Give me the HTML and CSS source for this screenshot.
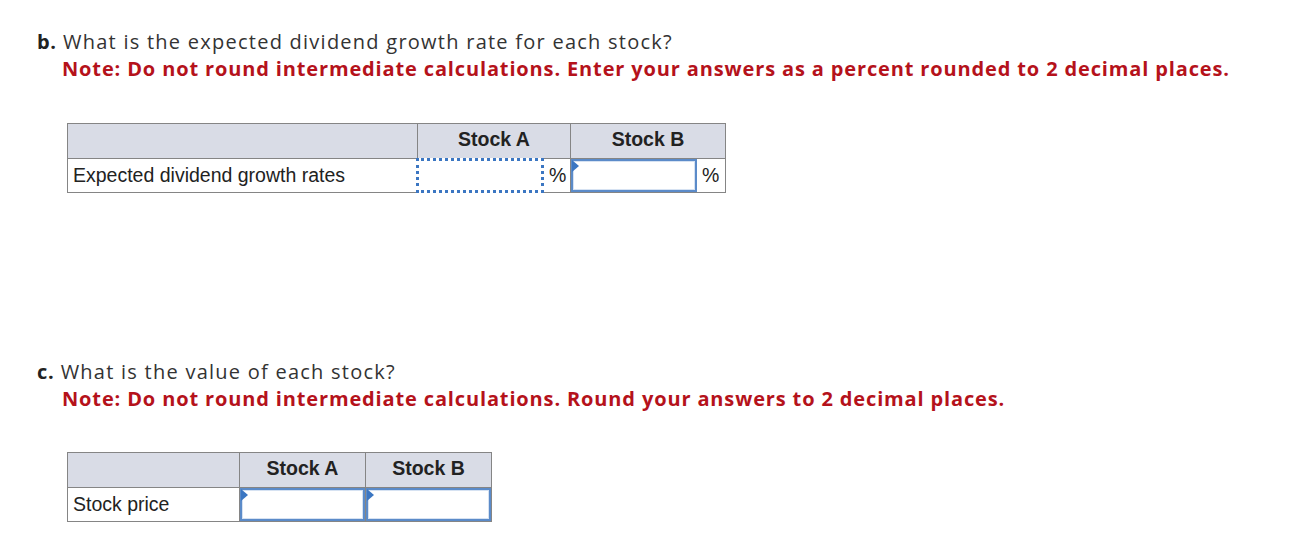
FILE: index.html
```html
<!DOCTYPE html>
<html>
<head>
<meta charset="utf-8">
<link rel="stylesheet" href="styles.css">
</head>
<body>
<div class="page">
  <section class="part part-b">
    <p class="question"><b>b.</b> What is the expected dividend growth rate for each stock?</p>
    <p class="note">Note: Do not round intermediate calculations. Enter your answers as a percent rounded to 2 decimal places.</p>
    <table class="grid grid-b">
      <thead>
        <tr>
          <th class="label-col"></th>
          <th class="val-col col-a">Stock A</th>
          <th class="val-col col-b">Stock B</th>
        </tr>
      </thead>
      <tbody>
        <tr>
          <td class="label">Expected dividend growth rates</td>
          <td class="val"><div class="cellwrap"><span class="inp inp-focus"></span><span class="pct">%</span></div></td>
          <td class="val"><div class="cellwrap"><span class="inp inp-flag"></span><span class="pct">%</span></div></td>
        </tr>
      </tbody>
    </table>
  </section>
  <section class="part part-c">
    <p class="question"><b>c.</b> What is the value of each stock?</p>
    <p class="note">Note: Do not round intermediate calculations. Round your answers to 2 decimal places.</p>
    <table class="grid grid-c">
      <thead>
        <tr>
          <th class="label-col"></th>
          <th class="val-col">Stock A</th>
          <th class="val-col">Stock B</th>
        </tr>
      </thead>
      <tbody>
        <tr>
          <td class="label">Stock price</td>
          <td class="val full"><span class="inp inp-flag inp-full"></span></td>
          <td class="val full"><span class="inp inp-flag inp-full"></span></td>
        </tr>
      </tbody>
    </table>
  </section>
</div>
</body>
</html>
```

FILE: styles.css
```css
html, body {
  margin: 0;
  padding: 0;
  background: #ffffff;
}

.page {
  padding: 28px 0 0 37px;
  font-family: "Open Sans", "Liberation Sans", sans-serif;
}

.question,
.note {
  margin: 0;
  font-size: 20px;
  line-height: 27px;
  color: #333333;
}

.question {
  letter-spacing: 1.25px;
}

.question b {
  font-weight: 700;
  color: #222222;
  letter-spacing: 0.6px;
}

.note {
  padding-left: 25px;
  color: #b5121b;
  font-weight: 700;
  letter-spacing: 0.86px;
}

.grid {
  border-collapse: collapse;
  margin-left: 30px;
  font-family: "Liberation Sans", Arial, sans-serif;
  font-size: 19.5px;
  color: #222222;
}

.grid-b {
  margin-top: 41px;
}

.part-c {
  margin-top: 165px;
}

.grid-c {
  margin-top: 40px;
}

.grid th {
  background: #d9dce6;
  border: 1px solid #858585;
  height: 31px;
  padding: 0 0 3px 0;
  font-weight: 700;
  text-align: center;
}

.grid td {
  border: 1px solid #858585;
  height: 33px;
  padding: 0;
  background: #ffffff;
}

.grid-b .label-col { width: 349px; }
.grid-b .col-a { width: 152px; }
.grid-b .col-b { width: 154px; }
.grid-c .label-col { width: 171px; }
.grid-c .val-col { width: 125px; }

.grid td.label {
  padding-left: 5px;
  text-align: left;
}

.cellwrap {
  display: flex;
  align-items: center;
  height: 33px;
}

.inp {
  display: block;
  position: relative;
  box-sizing: border-box;
  background: #ffffff;
}

.grid-b .inp {
  width: 126px;
  height: 33px;
}

.inp-focus {
  border: 3px dotted #3b76c2;
  margin-left: -2px;
  width: 128px !important;
  height: 35px !important;
  margin-top: -1px;
  margin-bottom: -1px;
}

.inp-flag {
  border: 2px solid #5b8bc9;
  box-shadow: inset 0 0 0 1px #d6e2f2;
}

.inp-flag::before {
  content: "";
  position: absolute;
  left: -1px;
  top: -1px;
  width: 0;
  height: 0;
  border-top: 6px solid transparent;
  border-bottom: 6px solid transparent;
  border-left: 7px solid #3b76c2;
}

.pct {
  margin-left: 5px;
  font-size: 19.5px;
  color: #222222;
}

.grid td.full {
  padding: 0;
}

.inp-full {
  width: 100%;
  height: 33px;
}
```
